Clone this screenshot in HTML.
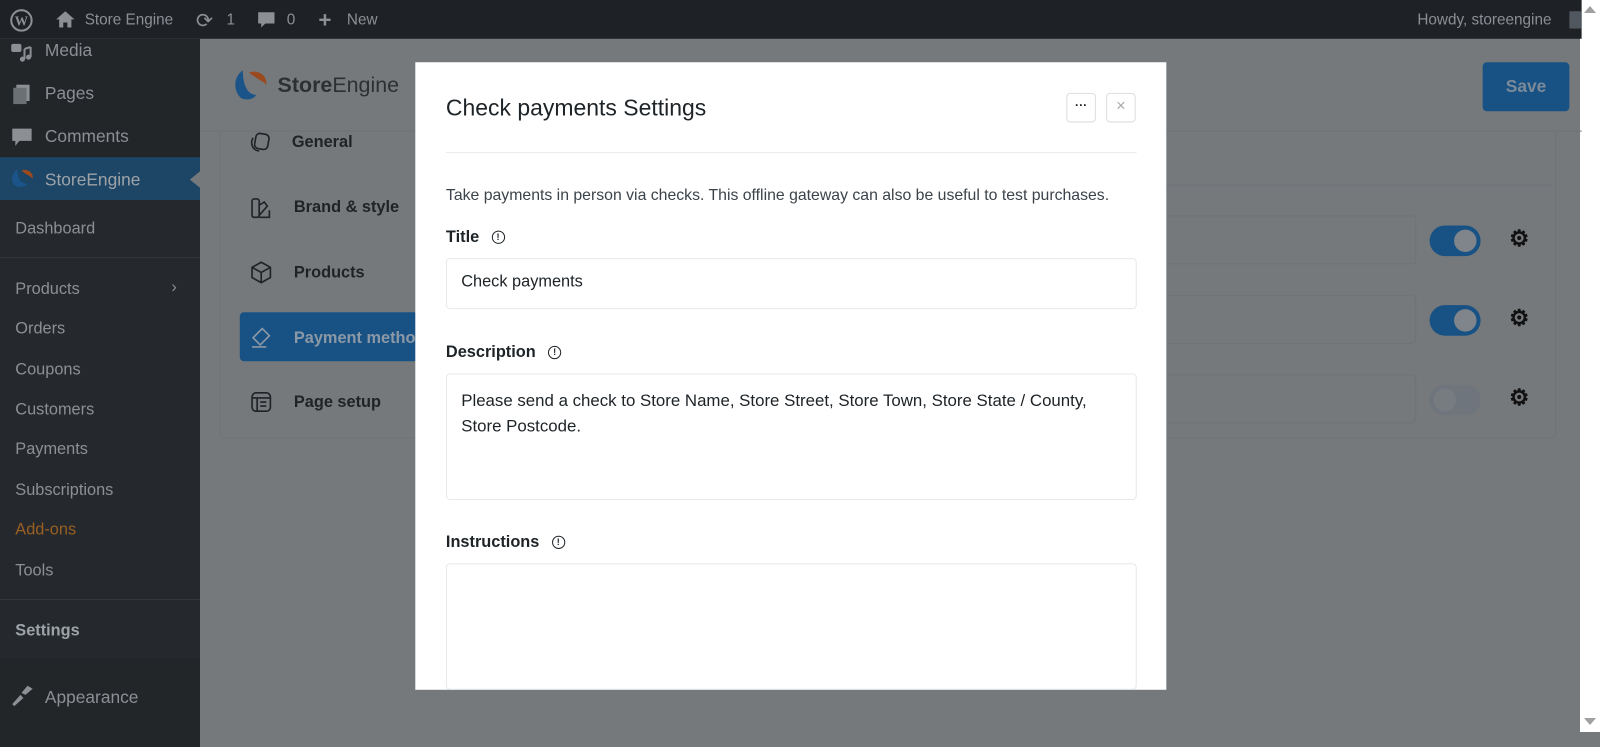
<!DOCTYPE html>
<html><head><meta charset="utf-8"><style>
*{box-sizing:border-box;margin:0;padding:0}
body{width:1600px;height:732px;overflow:hidden;background:#75797c;font-family:"Liberation Sans",sans-serif;position:relative}
#w{position:absolute;left:0;top:0;width:1568px;height:718px;transform:scale(1.0204);transform-origin:0 0}
.a{position:absolute}
#bar{left:0;top:0;width:1550px;height:38px;background:#1e2226;color:#8c8f94;font-size:15px}
#bar span{position:absolute;top:11px}
#side{left:0;top:38px;width:196px;height:694px;background:#222629}
.si{position:absolute;left:15px;color:#8c8f94;font-size:16px}
.sm{position:absolute;left:44px;color:#8c8f94;font-size:17px}
.nav{position:absolute;left:288px;color:#1f2326;font-size:16px;font-weight:bold}
.tg{position:absolute;left:1401px;width:50px;height:30px;border-radius:15px;background:#185284}
.tg i{position:absolute;right:4px;top:4px;width:22px;height:22px;border-radius:50%;background:#7f858b}
.gear{position:absolute;left:1479px;font-size:22px;color:#111;font-weight:bold}
#m{left:407px;top:61px;width:736px;height:615px;background:#fff}
.lbl{position:absolute;left:30px;font-size:16px;font-weight:bold;color:#1d2327}
.inf{display:inline-block;width:13px;height:13px;border:1.3px solid #1d2327;border-radius:50%;font-size:9px;text-align:center;line-height:11px;margin-left:12px;vertical-align:2px;font-weight:bold}
.inp{position:absolute;left:30px;width:677px;border:1px solid #e6e8ea;border-radius:4px;font-size:16px;color:#1d2327;padding:14px}
</style></head><body>
<div class="a" style="left:1580px;top:0;width:20px;height:732px;background:#fff"></div>
<div class="a" style="left:1584px;top:6px;width:0;height:0;border-left:6px solid transparent;border-right:6px solid transparent;border-bottom:7px solid #a0a0a0"></div>
<div class="a" style="left:1584px;top:718px;width:0;height:0;border-left:6px solid transparent;border-right:6px solid transparent;border-top:7px solid #a0a0a0"></div>
<div id="w">
<div id="bar" class="a">
<svg class="a" style="left:9px;top:8px" width="24" height="24"><circle cx="12" cy="12" r="10" fill="none" stroke="#8c8f94" stroke-width="2"/><text x="12" y="17" font-size="13" text-anchor="middle" fill="#8c8f94" font-family="Liberation Serif" font-weight="bold">W</text></svg>
<svg class="a" style="left:54px;top:10px" width="20" height="18"><path d="M10 1L1 9h3v8h4v-5h4v5h4V9h3z" fill="#8c8f94"/></svg>
<span style="left:83px">Store Engine</span>
<span style="left:192px;top:8px;font-size:20px">⟳</span><span style="left:222px">1</span>
<svg class="a" style="left:252px;top:11px" width="18" height="18"><path d="M1 1h16v11H8l-4 4v-4H1z" fill="#8c8f94"/></svg><span style="left:281px">0</span>
<span style="left:312px;top:7px;font-size:22px;font-weight:bold">+</span><span style="left:340px">New</span>
<span style="left:1389px">Howdy, storeengine</span>
<div class="a" style="left:1538px;top:11px;width:12px;height:17px;background:#50575e"></div>
</div>
<div id="side" class="a">
<svg class="a" style="left:10px;top:2px" width="24" height="22"><rect x="1" y="3" width="10" height="8" rx="2" fill="#8c8f94"/><path d="M14 8v10M20 6v10M14 8l6-2" stroke="#8c8f94" stroke-width="2" fill="none"/><circle cx="12" cy="18" r="2.5" fill="#8c8f94"/><circle cx="18" cy="16" r="2.5" fill="#8c8f94"/></svg>
<div class="sm" style="top:2px">Media</div>
<svg class="a" style="left:11px;top:44px" width="22" height="22"><rect x="5" y="1" width="13" height="16" fill="#8c8f94"/><rect x="2" y="4" width="13" height="16" fill="#6b7075"/></svg>
<div class="sm" style="top:44px">Pages</div>
<svg class="a" style="left:11px;top:86px" width="22" height="22"><path d="M1 2h19v12H8l-4 5v-5H1z" fill="#8c8f94"/></svg>
<div class="sm" style="top:86px">Comments</div>
<div class="a" style="left:0;top:116px;width:196px;height:42px;background:#1d4566"></div>
<div class="a" style="left:186px;top:130px;border-top:8px solid transparent;border-bottom:8px solid transparent;border-right:10px solid #75797c"></div>
<svg class="a" style="left:9px;top:126px" width="26" height="22"><path d="M8 2C2 6 1 14 6 18c4 2 10 2 12-2C12 16 8 12 8 2z" fill="#1b5488"/><path d="M12 3c6-2 12 2 11 8-3-3-7-4-11-8z" fill="#9a4a1e"/></svg>
<div class="sm" style="top:129px;color:#9ea3a8">StoreEngine</div>
<div class="a" style="left:0;top:158px;width:196px;height:450px;background:#25292d"></div>
<div class="si" style="top:178px">Dashboard</div>
<div class="a" style="left:0;top:214px;width:196px;height:1px;background:#33373b"></div>
<div class="si" style="top:237px">Products</div><div class="si" style="left:168px;top:235px">›</div>
<div class="si" style="top:276px">Orders</div>
<div class="si" style="top:316px">Coupons</div>
<div class="si" style="top:355px">Customers</div>
<div class="si" style="top:394px">Payments</div>
<div class="si" style="top:434px">Subscriptions</div>
<div class="si" style="top:473px;color:#9a5f22">Add-ons</div>
<div class="si" style="top:513px">Tools</div>
<div class="a" style="left:0;top:549px;width:196px;height:1px;background:#33373b"></div>
<div class="si" style="top:572px;font-weight:bold;color:#9ea3a8">Settings</div>
<div class="a" style="left:0;top:608px;width:196px;height:86px;background:#222629"></div>
<svg class="a" style="left:10px;top:632px" width="24" height="22"><path d="M2 20l8-9 3 3-9 8zM11 9l6-7 5 3-7 6z" fill="#8c8f94"/></svg>
<div class="sm" style="top:636px">Appearance</div>
</div>
<div class="a" style="left:196px;top:128px;width:1354px;height:1px;background:#6f7376"></div>
<svg class="a" style="left:226px;top:66px" width="40" height="36"><path d="M12 3C3 9 2 22 10 30c6 3 13 1 15-3C17 27 12 18 12 3z" fill="#1b5488"/><path d="M18 5c8-3 18 2 17 12-4-4-10-6-17-12z" fill="#9a4a1e"/></svg>
<div class="a" style="left:272px;top:72px;font-size:21px;color:#2d3033"><b>Store</b>Engine</div>
<div class="a" style="left:1453px;top:61px;width:85px;height:48px;border-radius:4px;background:#185284;color:#7a8a99;font-size:17px;font-weight:bold;text-align:center;line-height:48px">Save</div>
<div class="a" style="left:215px;top:128px;width:1310px;height:302px;border:1px solid #6f7376;border-top:none;border-radius:0 0 6px 6px"></div>
<div class="a" style="left:1120px;top:181px;width:400px;height:1px;background:#6f7376"></div>
<div class="a" style="left:1100px;top:211px;width:288px;height:48px;border:1px solid #6f7376;border-radius:4px"></div>
<div class="a" style="left:1100px;top:289px;width:288px;height:48px;border:1px solid #6f7376;border-radius:4px"></div>
<div class="a" style="left:1100px;top:367px;width:288px;height:48px;border:1px solid #6f7376;border-radius:4px"></div>
<div class="tg" style="top:221px"><i></i></div>
<div class="tg" style="top:299px"><i></i></div>
<div class="tg" style="top:377px;background:#6f757c"><i style="left:4px;right:auto;background:#777c81"></i></div>
<div class="gear" style="top:221px">⚙</div><div class="gear" style="top:299px">⚙</div><div class="gear" style="top:377px">⚙</div>
<svg class="a" style="left:244px;top:129px" width="22" height="22" fill="none" stroke="#1f2326" stroke-width="1.6"><rect x="6" y="2" width="13" height="15" rx="4" transform="rotate(10 12 10)"/><path d="M4 6c-3 5-1 12 6 13"/></svg>
<div class="nav" style="top:131px;left:286px">General</div>
<svg class="a" style="left:245px;top:193px" width="22" height="22" fill="none" stroke="#1f2326" stroke-width="1.6"><rect x="2" y="2" width="7" height="18" rx="2"/><path d="M9 8l5-3 3 4-8 9M9 20h10v-7"/></svg>
<div class="nav" style="top:195px">Brand &amp; style</div>
<svg class="a" style="left:245px;top:256px" width="22" height="22" fill="none" stroke="#1f2326" stroke-width="1.6"><path d="M11 1l9 5v10l-9 5-9-5V6zM2 6l9 5 9-5M11 11v10"/></svg>
<div class="nav" style="top:259px">Products</div>
<div class="a" style="left:235px;top:306px;width:175px;height:48px;border-radius:4px;background:#185284"></div>
<svg class="a" style="left:245px;top:318px" width="24" height="24" fill="none" stroke="#8b98a6" stroke-width="1.6"><path d="M3 13l9-9 7 7-9 9zM2 22h14"/></svg>
<div class="nav" style="top:323px;color:#8b98a6">Payment metho</div>
<svg class="a" style="left:245px;top:383px" width="22" height="22" fill="none" stroke="#1f2326" stroke-width="1.6"><rect x="2" y="2" width="18" height="18" rx="4"/><path d="M2 7h18M10 11h6M10 15h6M7 7v13"/></svg>
<div class="nav" style="top:386px">Page setup</div>

<div id="m" class="a">
<div class="a" style="left:30px;top:32px;font-size:22.5px;color:#1d2327">Check payments Settings</div>
<div class="a" style="left:638px;top:30px;width:29px;height:29px;border:1px solid #dcdee0;border-radius:4px;text-align:center;font-size:12px;line-height:22px;font-weight:bold;color:#1d2327">···</div>
<div class="a" style="left:677px;top:30px;width:29px;height:29px;border:1px solid #dcdee0;border-radius:4px;text-align:center;font-size:16px;line-height:26px;color:#a7aaad">×</div>
<div class="a" style="left:30px;top:88px;width:677px;height:1px;background:#ececec"></div>
<div class="a" style="left:30px;top:122px;font-size:15.5px;color:#3c434a;white-space:nowrap">Take payments in person via checks. This offline gateway can also be useful to test purchases.</div>
<div class="lbl" style="top:163px">Title<span class="inf">!</span></div>
<div class="inp" style="top:192px;height:50px">Check payments</div>
<div class="lbl" style="top:276px">Description<span class="inf">!</span></div>
<div class="inp" style="top:305px;height:124px;line-height:25px;font-size:16.5px">Please send a check to Store Name, Store Street, Store Town, Store State / County, Store Postcode.</div>
<div class="lbl" style="top:462px">Instructions<span class="inf">!</span></div>
<div class="inp" style="top:491px;height:124px"></div>
</div>
</div>
</body></html>
